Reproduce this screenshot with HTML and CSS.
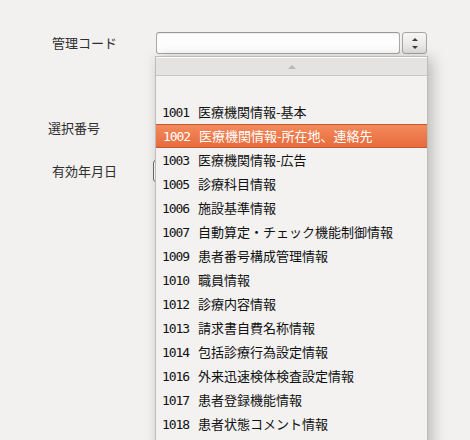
FILE: index.html
```html
<!DOCTYPE html>
<html lang="ja">
<head>
<meta charset="utf-8">
<link rel="stylesheet" href="styles.css">
</head>
<body>
<div class="form">
  <div class="row row-code">
    <span class="label label-code">管理コード</span>
    <div class="entry"></div>
    <div class="spin">
      <span class="tri tri-up"></span>
      <span class="tri tri-down"></span>
    </div>
  </div>
  <div class="row row-sel">
    <span class="label label-sel">選択番号</span>
    <div class="field field-hidden"></div>
  </div>
  <div class="row row-date">
    <span class="label label-date">有効年月日</span>
    <div class="field field-dark"></div>
  </div>
</div>

<div class="popup">
  <div class="scroll-head"><span class="head-tri"></span></div>
  <ul class="list">
    <li class="item blank"></li>
    <li class="item"><span class="code">1001</span>医療機関情報-基本</li>
    <li class="item selected"><span class="code">1002</span>医療機関情報-所在地、連絡先</li>
    <li class="item"><span class="code">1003</span>医療機関情報-広告</li>
    <li class="item"><span class="code">1005</span>診療科目情報</li>
    <li class="item"><span class="code">1006</span>施設基準情報</li>
    <li class="item"><span class="code">1007</span>自動算定・チェック機能制御情報</li>
    <li class="item"><span class="code">1009</span>患者番号構成管理情報</li>
    <li class="item"><span class="code">1010</span>職員情報</li>
    <li class="item"><span class="code">1012</span>診療内容情報</li>
    <li class="item"><span class="code">1013</span>請求書自費名称情報</li>
    <li class="item"><span class="code">1014</span>包括診療行為設定情報</li>
    <li class="item"><span class="code">1016</span>外来迅速検体検査設定情報</li>
    <li class="item"><span class="code">1017</span>患者登録機能情報</li>
    <li class="item"><span class="code">1018</span>患者状態コメント情報</li>
  </ul>
</div>
</body>
</html>
```

FILE: styles.css
```css
html, body {
  margin: 0;
  padding: 0;
}
body {
  width: 470px;
  height: 440px;
  overflow: hidden;
  background: #f2f1f0;
  font-family: "Noto Sans CJK JP", "Noto Sans", sans-serif;
  font-size: 13px;
  color: #333;
  position: relative;
}
.form {
  padding-top: 32px;
  display: flex;
  flex-direction: column;
}
.row {
  display: flex;
  align-items: center;
  height: 22px;
}
.row-sel { margin-top: 63px; }
.row-date { margin-top: 21px; }
.label {
  line-height: 22px;
  color: #2e2e2e;
}
.label-code { margin-left: 52px; width: 104px; }
.label-sel { margin-left: 48px; width: 112px; }
.label-date { margin-left: 52px; width: 101px; }

.entry {
  box-sizing: border-box;
  width: 244px;
  height: 22px;
  border: 1px solid #a9a8a6;
  border-top-color: #9a9997;
  border-radius: 3px;
  background: linear-gradient(#fcfcfc, #ffffff);
  box-shadow: inset 0 1px 1px rgba(0,0,0,0.06);
}
.spin {
  box-sizing: border-box;
  width: 25px;
  height: 22px;
  margin-left: 2px;
  border: 1px solid #a6a5a3;
  border-radius: 3px;
  background: linear-gradient(#f6f6f5, #e2e1df);
  display: flex;
  flex-direction: column;
  align-items: center;
  justify-content: center;
  gap: 5px;
}
.tri {
  width: 0;
  height: 0;
  border-left: 3px solid transparent;
  border-right: 3px solid transparent;
}
.tri-up { border-bottom: 3px solid #3c3c3c; }
.tri-down { border-top: 3px solid #3c3c3c; }

.field {
  box-sizing: border-box;
  width: 120px;
  height: 22px;
  border: 1px solid #a9a8a6;
  border-radius: 3px;
  background: #fff;
}
.field-dark {
  border-color: #6e6d6b;
}

.popup {
  position: absolute;
  left: 155px;
  top: 56px;
  width: 273px;
  height: 400px;
  box-sizing: border-box;
  background: #f3f2f1;
  border: 1px solid #bdbcba;
  border-bottom: none;
  box-shadow: 4px 2px 14px rgba(0,0,0,0.24);
  overflow: hidden;
}
.scroll-head {
  height: 17px;
  border-top: 1px solid #fbfbfa;
  border-bottom: 1px solid #c8c7c5;
  background: #e4e3e1;
  display: flex;
  justify-content: center;
  align-items: center;
}
.head-tri {
  width: 0;
  height: 0;
  border-left: 4px solid transparent;
  border-right: 4px solid transparent;
  border-bottom: 4px solid #b9b8b6;
  margin-left: 1px;
}
.list {
  list-style: none;
  margin: 0;
  padding: 0;
}
.item {
  box-sizing: border-box;
  height: 24px;
  line-height: 24px;
  padding-left: 6px;
  color: #111;
  white-space: nowrap;
}
.code {
  display: inline-block;
  width: 36px;
  font-family: "DejaVu Sans Mono", monospace;
  font-size: 13px;
  letter-spacing: -1.1px;
}
.selected {
  margin: 0 -1px;
  padding-left: 7px;
  border: 1px solid #c4582c;
  line-height: 22px;
  background: linear-gradient(#f38a5c, #e76b3c);
  color: #fff;
}
```
